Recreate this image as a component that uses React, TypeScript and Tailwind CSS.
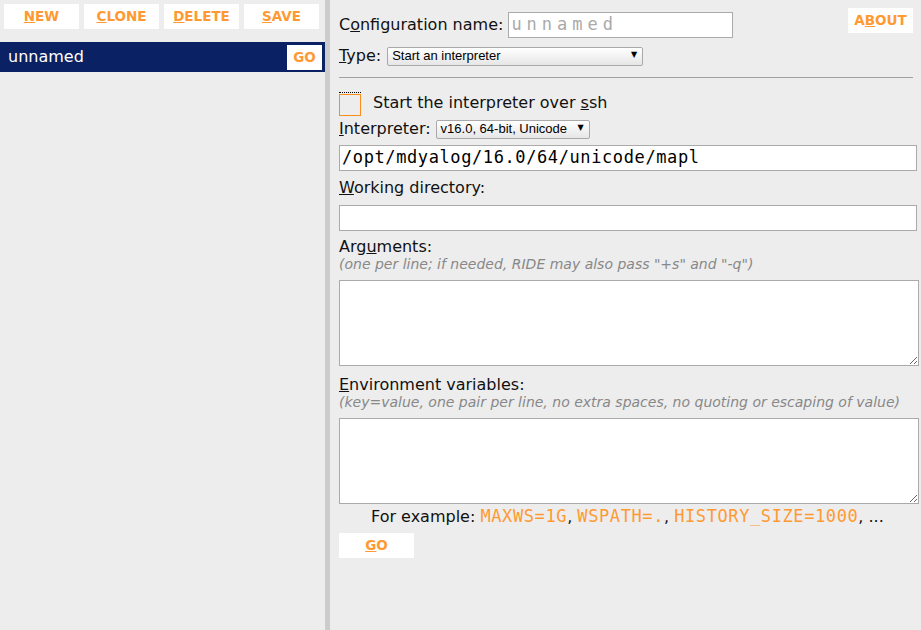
import type { ReactNode } from "react";

const sans = "font-['DejaVu_Sans',sans-serif]";
const mono = "font-['DejaVu_Sans_Mono',monospace]";

function Btn({ children, className = "w-[75px]" }: { children: ReactNode; className?: string }) {
  return (
    <button
      className={`flex h-[25px] items-center justify-center bg-white text-[13.5px] font-bold text-[#ff9a33] ${sans} ${className}`}
    >
      {children}
    </button>
  );
}

function Select({ value, width }: { value: string; width: string }) {
  return (
    <div className={`relative ${width}`}>
      <div className="flex h-[19px] w-full items-center rounded-[2px] border border-[#a9a9a9] bg-gradient-to-b from-white to-[#e6e6e6] pl-[4px] font-['Liberation_Sans',sans-serif] text-[13px] text-black">
        {value}
      </div>
      <span className="absolute right-[6px] top-[2px] text-[8px] text-black">▼</span>
    </div>
  );
}

function Label({ children, className = "" }: { children: ReactNode; className?: string }) {
  return <div className={`h-[20px] text-[16px] leading-[20px] text-[#111] ${className}`}>{children}</div>;
}

function Hint({ children }: { children: ReactNode }) {
  return <div className="h-[15px] text-[14px] italic leading-[15px] text-[#888]">{children}</div>;
}

function Code({ children }: { children: ReactNode }) {
  return <span className={`text-[17px] tracking-[0.6px] text-[#ff9a33] ${mono}`}>{children}</span>;
}

export default function App() {
  return (
    <div className={`flex h-[630px] w-[921px] bg-[#ededed] ${sans}`}>
      <aside className="w-[325px] shrink-0">
        <div className="flex gap-[5px] pl-[4px] pt-[4px]">
          <Btn>
            <u>N</u>EW
          </Btn>
          <Btn>
            <u>C</u>LONE
          </Btn>
          <Btn>
            <u>D</u>ELETE
          </Btn>
          <Btn>
            <u>S</u>AVE
          </Btn>
        </div>
        <div className="mt-[13px] flex h-[30px] items-center justify-between bg-[#0a2164] pl-[8px] pr-[3px]">
          <span className="text-[16px] text-white">unnamed</span>
          <button className="flex h-[25px] w-[35px] items-center justify-center bg-white text-[13.5px] font-bold text-[#ff9a33]">
            GO
          </button>
        </div>
      </aside>
      <div className="w-[5px] shrink-0 bg-[#cccccc]" />
      <main className="relative flex-1 pl-[9px] pr-[4px] pt-[12px]">
        <Btn className="absolute right-[8px] top-[8px] w-[65px]">
          A<u>B</u>OUT
        </Btn>
        <div className="flex items-center gap-[5px]">
          <span className="text-[16px] text-[#111]">
            C<u>o</u>nfiguration name:
          </span>
          <div
            className={`flex h-[26px] w-[225px] items-center border border-[#aaa] bg-white pl-[2px] text-[17px] tracking-[5px] text-[#aaa] ${mono}`}
          >
            unnamed
          </div>
        </div>
        <div className="mt-[6px] flex items-center gap-[6px]">
          <span className="text-[16px] text-[#111]">
            <u>T</u>ype:
          </span>
          <Select value="Start an interpreter" width="w-[256px]" />
        </div>
        <div className="mr-[4px] mt-[9px] border-t border-[#a0a0a0]" />
        <div className="mt-[14px] flex items-start gap-[12px]">
          <div className="border-t border-dotted border-black pt-[1px]">
            <div className="h-[22px] w-[22px] border border-[#ff8c1a]" />
          </div>
          <span className="-mt-[1px] text-[16px] text-[#111]">
            Start the interpreter over <u>s</u>sh
          </span>
        </div>
        <div className="mt-[1px] flex items-center gap-[5px]">
          <span className="text-[16px] text-[#111]">
            <u>I</u>nterpreter:
          </span>
          <Select value="v16.0, 64-bit, Unicode" width="w-[154px]" />
        </div>
        <div
          className={`mt-[4px] flex h-[26px] items-center border border-[#aaa] bg-white pl-[2px] text-[17px] tracking-[0.6px] text-black ${mono}`}
        >
          /opt/mdyalog/16.0/64/unicode/mapl
        </div>
        <Label className="mt-[7px]">
          <u>W</u>orking directory:
        </Label>
        <div className="mt-[7px] h-[26px] border border-[#aaa] bg-white" />
        <Label className="mt-[6px]">
          Arg<u>u</u>ments:
        </Label>
        <Hint>(one per line; if needed, RIDE may also pass "+s" and "-q")</Hint>
        <textarea className="mt-[8px] block h-[86px] w-[calc(100%+2px)] border border-[#aaa] bg-white" />
        <Label className="mt-[9px]">
          <u>E</u>nvironment variables:
        </Label>
        <Hint>(key=value, one pair per line, no extra spaces, no quoting or escaping of value)</Hint>
        <textarea className="mt-[8px] block h-[86px] w-[calc(100%+2px)] border border-[#aaa] bg-white" />
        <div className="mt-[2px] h-[20px] pl-[32px] text-[16px] leading-[20px] text-[#111]">
          For example: <Code>MAXWS=1G</Code>, <Code>WSPATH=.</Code>, <Code>HISTORY_SIZE=1000</Code>, ...
        </div>
        <Btn className="mt-[7px] w-[75px]">
          <u>G</u>O
        </Btn>
      </main>
    </div>
  );
}
